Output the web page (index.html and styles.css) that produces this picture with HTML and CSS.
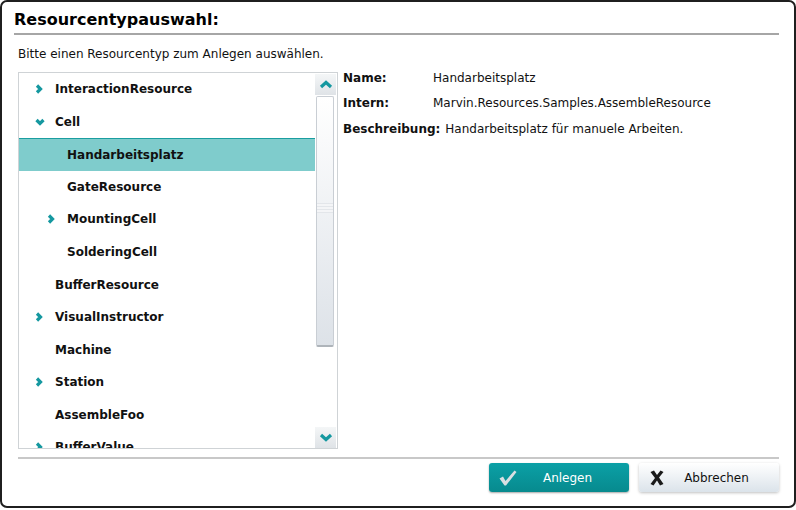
FILE: index.html
```html
<!DOCTYPE html>
<html>
<head>
<meta charset="utf-8">
<link rel="stylesheet" href="styles.css">
</head>
<body>
<div class="window">
  <div class="header">
    <h1 class="title">Resourcentypauswahl:</h1>
  </div>
  <p class="hint">Bitte einen Resourcentyp zum Anlegen auswählen.</p>
  <div class="main">
    <div class="listbox">
      <ul class="tree">
        <li class="row l0"><span class="exp"><svg width="8" height="10" viewBox="0 0 8 10"><polyline points="2,1.5 5.5,5 2,8.5" class="chev"/></svg></span><span class="label">InteractionResource</span></li>
        <li class="row l0"><span class="exp"><svg width="10" height="8" viewBox="0 0 10 8"><polyline points="1.5,2 5,5.5 8.5,2" class="chev"/></svg></span><span class="label">Cell</span></li>
        <li class="row l1 selected"><span class="exp"></span><span class="label">Handarbeitsplatz</span></li>
        <li class="row l1"><span class="exp"></span><span class="label">GateResource</span></li>
        <li class="row l1"><span class="exp"><svg width="8" height="10" viewBox="0 0 8 10"><polyline points="2,1.5 5.5,5 2,8.5" class="chev"/></svg></span><span class="label">MountingCell</span></li>
        <li class="row l1"><span class="exp"></span><span class="label">SolderingCell</span></li>
        <li class="row l0"><span class="exp"></span><span class="label">BufferResource</span></li>
        <li class="row l0"><span class="exp"><svg width="8" height="10" viewBox="0 0 8 10"><polyline points="2,1.5 5.5,5 2,8.5" class="chev"/></svg></span><span class="label">VisualInstructor</span></li>
        <li class="row l0"><span class="exp"></span><span class="label">Machine</span></li>
        <li class="row l0"><span class="exp"><svg width="8" height="10" viewBox="0 0 8 10"><polyline points="2,1.5 5.5,5 2,8.5" class="chev"/></svg></span><span class="label">Station</span></li>
        <li class="row l0"><span class="exp"></span><span class="label">AssembleFoo</span></li>
        <li class="row l0"><span class="exp"><svg width="8" height="10" viewBox="0 0 8 10"><polyline points="2,1.5 5.5,5 2,8.5" class="chev"/></svg></span><span class="label">BufferValue</span></li>
      </ul>
      <div class="scrollbar">
        <div class="sbtn"><svg width="14" height="9" viewBox="0 0 14 9"><polyline points="2,7 7,2.5 12,7" class="schev"/></svg></div>
        <div class="thumb"><div class="grip"></div></div>
        <div class="track"></div>
        <div class="sbtn"><svg width="14" height="9" viewBox="0 0 14 9"><polyline points="2,2 7,6.5 12,2" class="schev"/></svg></div>
      </div>
    </div>
    <div class="details">
      <div class="drow"><span class="dlabel">Name:</span><span class="dval">Handarbeitsplatz</span></div>
      <div class="drow"><span class="dlabel">Intern:</span><span class="dval">Marvin.Resources.Samples.AssembleResource</span></div>
      <div class="drow"><span class="dlabel auto">Beschreibung:</span><span class="dval">Handarbeitsplatz für manuele Arbeiten.</span></div>
    </div>
  </div>
  <div class="footer">
    <button class="btn primary"><svg class="bicon" width="20" height="18" viewBox="0 0 20 18"><path d="M1.5 9.5 L5 7.5 L7.5 12 L16.5 1.5 L18.5 3 L8 16.5 L6.5 16.5 Z" fill="#d9dfe2"/></svg><span>Anlegen</span></button>
    <button class="btn secondary"><svg class="bicon" width="18" height="18" viewBox="0 0 18 18"><path d="M2.5 3 L6 1.5 L9 6 L12.5 1.5 L15.5 3 L11 8.5 L15.5 15 L12 16.5 L9 11.5 L5.5 16.5 L2.5 15 L7 9 Z" fill="#1a1a1a"/></svg><span>Abbrechen</span></button>
  </div>
</div>
</body>
</html>
```

FILE: styles.css
```css
* { box-sizing: border-box; }
html, body { margin: 0; padding: 0; background: #ffffff; }
body { font-family: "DejaVu Sans", Verdana, sans-serif; color: #111; }

.window {
  width: 796px;
  height: 508px;
  border: 2px solid #1f1f1f;
  border-radius: 7px;
  background: #fff;
  padding: 0 15px 0 16px;
  display: flex;
  flex-direction: column;
}

.header {
  margin-left: -4px;
  border-bottom: 2px solid #a6a6a6;
  height: 33px;
  padding-top: 9px;
}
.title {
  margin: 0;
  font-size: 16px;
  font-weight: bold;
  line-height: 18px;
  color: #000;
}

.hint {
  margin: 12px 0 0 0;
  font-size: 12px;
  line-height: 14px;
  color: #111;
}

.main {
  display: flex;
  margin-top: 11px;
  height: 377px;
}

.listbox {
  width: 320px;
  height: 377px;
  border: 1px solid #cfd3d6;
  display: flex;
  overflow: hidden;
}

.tree {
  list-style: none;
  margin: 0;
  padding: 0;
  flex: 1;
  overflow: hidden;
}
.row {
  height: 32.55px;
  display: flex;
  align-items: center;
  font-size: 12px;
  font-weight: bold;
  color: #111;
  white-space: nowrap;
}
.row.l0 { padding-left: 15px; }
.row.l1 { padding-left: 27px; }
.row.selected {
  background: #7fcccc;
  border-top: 1px solid #1a9ea0;
}
.exp {
  width: 21px;
  height: 12px;
  display: flex;
  align-items: center;
  padding-left: 1px;
}
.chev {
  fill: none;
  stroke: #1598a0;
  stroke-width: 3.2;
  stroke-linejoin: miter;
}

.scrollbar {
  width: 22px;
  display: flex;
  flex-direction: column;
  padding: 1px 1px 0 0;
}
.sbtn {
  height: 21px;
  background: linear-gradient(#f4f6f7, #dfe3e7);
  display: flex;
  align-items: center;
  justify-content: center;
}
.schev {
  fill: none;
  stroke: #1598a0;
  stroke-width: 3.2;
}
.thumb {
  margin: 1px 2px 0 1px;
  height: 251px;
  border: 1px solid #c9ced4;
  border-bottom: 2px solid #aeb4ba;
  border-radius: 2px;
  background: linear-gradient(#ffffff, #dde2e8);
  display: flex;
  align-items: center;
}
.grip {
  width: 100%;
  height: 10px;
  margin-top: -26px;
  background: repeating-linear-gradient(#e3e6ea 0 1px, #f4f5f7 1px 3px);
}
.track { flex: 1; }

.details {
  flex: 1;
  padding-left: 5px;
  margin-top: -7px;
  font-size: 12px;
}
.drow {
  display: flex;
  height: 25.5px;
  align-items: center;
}
.dlabel {
  font-weight: bold;
  width: 90px;
  color: #111;
}
.dlabel.auto { width: auto; margin-right: 5px; }
.dval { color: #111; }

.footer {
  margin-top: 8px;
  border-top: 2px solid #c8c8c8;
  display: flex;
  justify-content: flex-end;
  gap: 10px;
  padding-top: 4px;
}
.btn {
  width: 140px;
  height: 29px;
  border: none;
  border-radius: 3px;
  font-family: "DejaVu Sans", Verdana, sans-serif;
  font-size: 12px;
  display: flex;
  align-items: center;
  padding: 0 0 0 9px;
}
.btn span { flex: 1; text-align: center; padding-right: 12px; }
.btn.primary {
  background: linear-gradient(#0ba0a6, #078a8e);
  color: #fff;
  box-shadow: 0 1px 2px rgba(0,0,0,0.35);
}
.btn.secondary {
  background: linear-gradient(#ffffff, #dbe3ea);
  color: #111;
  box-shadow: 0 1px 3px rgba(0,0,0,0.25);
}
```
